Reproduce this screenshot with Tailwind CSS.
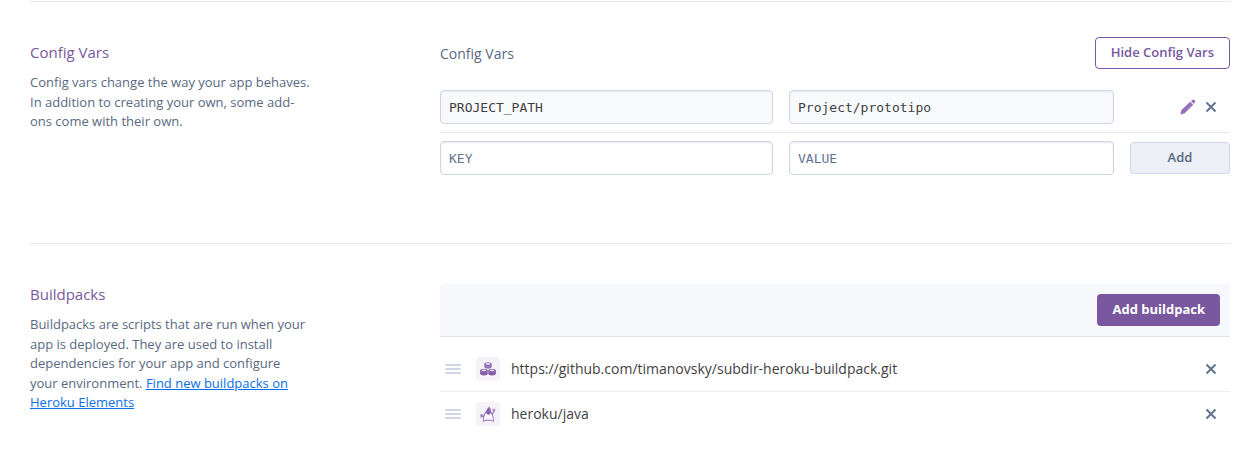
<!DOCTYPE html>
<html lang="en">
<head>
<meta charset="utf-8">
<meta name="viewport" content="width=device-width, initial-scale=1">
<title>App settings</title>
<script src="https://cdn.jsdelivr.net/npm/@tailwindcss/browser@4"></script>
</head>
<body class="bg-white font-['Open_Sans',sans-serif] text-[13px] text-[#596981]">
<svg class="hidden" aria-hidden="true">
  <symbol id="close" viewBox="0 0 12 12"><path d="M1.5 1.5l9 9M10.5 1.5l-9 9" fill="none" stroke="#62748e" stroke-width="2"/></symbol>
  <symbol id="grip" viewBox="0 0 16 10"><path d="M1 1h14M1 5h14M1 9h14" fill="none" stroke="#cfd7e6" stroke-width="2" stroke-linecap="round"/></symbol>
</svg>
<main class="pt-px pr-[26px] pl-[30px]">
  <section class="grid min-h-[242px] grid-cols-[280px_minmax(0,1fr)] gap-x-[130px] border-t border-[#e6e9f2] pt-[35px] pr-px">
    <div>
      <h2 class="pt-[3px] text-[15px] leading-6 text-[#79589f]">Config Vars</h2>
      <p class="mt-[9px] leading-normal">Config vars change the way your app behaves. In addition to creating your own, some add-ons come with their own.</p>
    </div>
    <div>
      <div class="flex h-8 items-center justify-between">
        <h3 class="pt-[2px] text-sm">Config Vars</h3>
        <button type="button" class="h-8 rounded-sm border border-[#79589f] px-[15px] font-semibold text-[#79589f]">Hide Config Vars</button>
      </div>
      <div class="mt-[21px] grid grid-cols-[333fr_325fr_100px] items-center gap-x-4 border-b border-[#e6e9f2] pb-2">
        <input aria-label="Config var key" readonly value="PROJECT_PATH" class="h-[34px] w-full min-w-0 rounded-sm border border-[#cfd7e6] bg-[#f9fafc] px-2 font-['DejaVu_Sans_Mono',monospace] text-[#3f3f44] shadow-[inset_0_1px_2px_#e4e8f0]">
        <input aria-label="Config var value" readonly value="Project/prototipo" class="h-[34px] w-full min-w-0 rounded-sm border border-[#cfd7e6] bg-[#f9fafc] px-2 font-['DejaVu_Sans_Mono',monospace] text-[#3f3f44] shadow-[inset_0_1px_2px_#e4e8f0]">
        <div class="flex items-center justify-end gap-[9px] pr-[13px]">
          <button type="button" aria-label="Edit config var"><svg class="block size-4" viewBox="0 0 16 16" fill="#9370b8"><path d="M.3 15.700l1.200-4.700 8.700-8.200 3 3-8.500 8.500zM11 2.100l1.300-1.200q1-.8 2 .2l.5.5q.8.9 0 1.800L13.600 4.700z"/></svg></button>
          <button type="button" aria-label="Delete config var"><svg class="block size-3"><use href="#close"/></svg></button>
        </div>
      </div>
      <form class="mt-2 grid grid-cols-[333fr_325fr_100px] items-center gap-x-4">
        <input aria-label="New key" placeholder="KEY" class="h-[34px] w-full min-w-0 rounded-sm border border-[#cfd7e6] px-2 font-['DejaVu_Sans_Mono',monospace] shadow-[inset_0_1px_2px_#e4e8f0] placeholder:text-[#62748e]">
        <input aria-label="New value" placeholder="VALUE" class="h-[34px] w-full min-w-0 rounded-sm border border-[#cfd7e6] px-2 font-['DejaVu_Sans_Mono',monospace] shadow-[inset_0_1px_2px_#e4e8f0] placeholder:text-[#62748e]">
        <button type="button" class="h-8 rounded-sm border border-[#cfd7e6] bg-[#edf0f6] font-semibold text-[#596981]">Add</button>
      </form>
    </div>
  </section>
  <section class="grid grid-cols-[280px_minmax(0,1fr)] gap-x-[130px] border-t border-[#e6e9f2] pt-10 pr-px">
    <div>
      <h2 class="-mt-[2px] text-[15px] leading-6 text-[#79589f]">Buildpacks</h2>
      <p class="mt-[9px] leading-normal">Buildpacks are scripts that are run when your app is deployed. They are used to install dependencies for your app and configure your environment. <a href="#" class="text-[#0a6fe8] underline">Find new buildpacks on Heroku Elements</a></p>
    </div>
    <div>
      <div class="flex h-[53px] items-center justify-end rounded-t-sm border-b border-[#e0e3ef] bg-[#f7f8fc] pr-[10px]">
        <button type="button" class="h-8 rounded-sm bg-[#79589f] px-[15px] font-bold text-white">Add buildpack</button>
      </div>
      <ul class="pt-[10px] text-sm text-[#3f3f44]">
        <li class="flex h-[45px] items-center border-b border-[#eceef5] pr-[13px] pl-[5px]">
          <svg class="h-[10px] w-4"><use href="#grip"/></svg>
          <span class="mr-[11px] ml-[15px] grid size-6 place-items-center rounded-sm bg-[#f5f2fa]">
            <svg class="size-4" viewBox="0 0 16 16">
              <defs>
                <linearGradient id="purple" gradientUnits="userSpaceOnUse" x1="0" y1="1" x2="0" y2="15">
                  <stop offset="0" stop-color="#a583c6"/>
                  <stop offset="1" stop-color="#79589f"/>
                </linearGradient>
              </defs>
              <g fill="url(#purple)">
                <path d="M4.200 3Q4.200 1.200 8 1.200T11.800 3v2.700Q11.500 7.500 8 7.600 4.500 7.500 4.200 5.700z"/>
                <path d="M.1 9.400Q.3 7.700 4 7.700t3.800 1.700v3Q7.500 14.300 4 14.400.4 14.300.1 12.400z"/>
                <path d="M8.200 9.400Q8.400 7.700 12 7.700t3.900 1.700v3q-.3 1.900-3.900 2-3.500-.1-3.800-2z"/>
              </g>
              <g fill="#e9e0f3"><ellipse cx="8" cy="2.900" rx="2.100" ry=".8"/><ellipse cx="4" cy="9.400" rx="2.100" ry=".8"/><ellipse cx="12" cy="9.400" rx="2.100" ry=".8"/></g>
            </svg>
          </span>
          <span class="flex-1">https://github.com/timanovsky/subdir-heroku-buildpack.git</span>
          <button type="button" aria-label="Remove subdir buildpack"><svg class="block size-3"><use href="#close"/></svg></button>
        </li>
        <li class="flex h-11 items-center pr-[13px] pl-[5px]">
          <svg class="h-[10px] w-4"><use href="#grip"/></svg>
          <span class="mr-[11px] ml-[15px] grid size-6 place-items-center rounded-sm bg-[#f5f2fa]">
            <svg class="size-4" viewBox="0 0 16 16">
              <path fill="#fdfcff" stroke="#9a7abd" stroke-width="1.100" stroke-linejoin="round" stroke-linecap="round" d="M5.300 6.500Q3.300 10.500 3.200 15q2 .3 2.800-1 2.500.8 4.700 0 1 1.300 2.800 1-.1-4.500-2-8.500z"/>
              <path fill="none" stroke="#9a7abd" stroke-width="1.300" stroke-linecap="round" d="M4.200 9.800Q2.500 11 1.200 9.500M.8 8.800h1.600M1 11l.8-1M12 8q1.800-.8 1.900-3"/>
              <path fill="#8a68ae" d="M9.300.5Q6.300 3 5 7q1.800.8 3.400.2 1.600.6 3.100-.2Q11 3 9.300.5z"/>
              <circle cx="8.400" cy="7.600" r="1.400" fill="#85619f"/>
              <path fill="#9a7abd" d="M14.100 2l.5 1.400 1.400.3-1.200.8-.5 1.500-.7-1.300-1.600-.3 1.400-.9zM11.700 2.500l1.200.6-.4.6z"/>
            </svg>
          </span>
          <span class="flex-1">heroku/java</span>
          <button type="button" aria-label="Remove heroku/java"><svg class="block size-3"><use href="#close"/></svg></button>
        </li>
      </ul>
    </div>
  </section>
</main>
</body>
</html>
